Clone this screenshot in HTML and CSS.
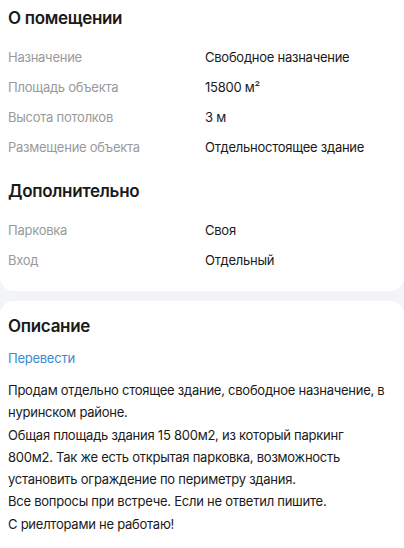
FILE: index.html
```html
<!DOCTYPE html>
<html lang="ru">
<head>
<meta charset="utf-8">
<link rel="stylesheet" href="styles.css">
</head>
<body>
<div class="page">
  <section class="card card-top">
    <h2 class="title">О помещении</h2>
    <div class="rows">
      <div class="row"><span class="label">Назначение</span><span class="value">Свободное назначение</span></div>
      <div class="row"><span class="label">Площадь объекта</span><span class="value">15800 м²</span></div>
      <div class="row"><span class="label">Высота потолков</span><span class="value">3 м</span></div>
      <div class="row"><span class="label">Размещение объекта</span><span class="value">Отдельностоящее здание</span></div>
    </div>
    <h2 class="title title-2">Дополнительно</h2>
    <div class="rows">
      <div class="row"><span class="label">Парковка</span><span class="value">Своя</span></div>
      <div class="row"><span class="label">Вход</span><span class="value">Отдельный</span></div>
    </div>
  </section>
  <section class="card card-bottom">
    <h2 class="title">Описание</h2>
    <a class="translate">Перевести</a>
    <p class="desc">Продам отдельно стоящее здание, свободное назначение, в нуринском районе.<br>Общая площадь здания 15 800м2, из который паркинг 800м2. Так же есть открытая парковка, возможность установить ограждение по периметру здания.<br>Все вопросы при встрече. Если не ответил пишите.<br>С риелторами не работаю!</p>
  </section>
</div>
</body>
</html>
```
FILE: styles.css
```css
html, body {
  margin: 0;
  padding: 0;
  background: #f2f4f7;
}
body {
  font-family: Inter, "Noto Sans", sans-serif;
  color: #1a1a1a;
  width: 404px;
  height: 548px;
  overflow: hidden;
}
.page {
  display: flex;
  flex-direction: column;
  gap: 10px;
}
.card {
  background: #fff;
  padding: 0 8px;
}
.card-top {
  border-radius: 0 0 14px 14px;
  padding-bottom: 16px;
}
.card-bottom {
  border-radius: 14px 14px 0 0;
  padding-top: 14px;
  padding-bottom: 40px;
}
.title {
  margin: 0;
  font-size: 17px;
  font-weight: 600;
  line-height: 22px;
  padding-top: 7px;
  letter-spacing: -0.3px;
}
.card-bottom .title { padding-top: 0; }
.title-2 { padding-top: 18px; }
.rows {
  display: flex;
  flex-direction: column;
  margin-top: 13px;
}
.row {
  display: grid;
  grid-template-columns: 197px 1fr;
  height: 30px;
  align-items: center;
  font-size: 13px;
  letter-spacing: -0.25px;
}
.label { color: #9a9a9a; }
.value { color: #1a1a1a; }
.translate {
  display: block;
  margin-top: 12px;
  font-size: 13px;
  letter-spacing: -0.25px;
  color: #3c8bd2;
  line-height: 18px;
}
.desc {
  margin: 12px 0 0;
  max-width: 382px;
  font-size: 13px;
  letter-spacing: -0.25px;
  line-height: 22.3px;
  color: #1a1a1a;
}
```
